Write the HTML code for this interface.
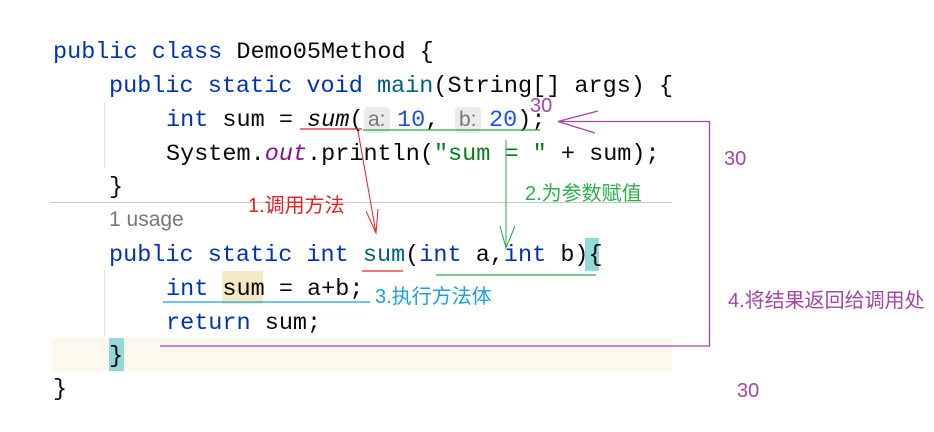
<!DOCTYPE html>
<html><head><meta charset="utf-8"><style>
body{margin:0;width:934px;height:432px;background:#fff;position:relative;overflow:hidden}
.l{position:absolute;font-family:"Liberation Mono",monospace;font-size:23.5px;line-height:34px;white-space:pre;color:#080808}
.k{color:#0033b3}.f{color:#00627a}.n{color:#1750eb}.s{color:#067d17}.o{color:#871094;font-style:italic}
.h{position:absolute;background:#ebebeb;color:#777;font-family:"Liberation Sans",sans-serif;font-size:21px;line-height:26px;border-radius:4px;padding:0 4px}
.t{position:absolute;font-family:"Liberation Sans","Noto Sans CJK SC",sans-serif;font-size:20px;line-height:24px;white-space:nowrap}
.bg{position:absolute}
</style></head><body>
<div class="bg" style="left:52px;top:338px;width:620px;height:33px;background:#fcf9ec"></div>
<div class="bg" style="left:109px;top:338px;width:15px;height:33px;background:#93d9d9"></div>
<div class="bg" style="left:585px;top:238px;width:14px;height:33px;background:#93d9d9"></div>
<div class="bg" style="left:222px;top:271px;width:41px;height:33px;background:#f5e9c6"></div>
<div class="bg" style="left:50px;top:202px;width:622px;height:1px;background:#c8c8c8"></div>
<div class="bg" style="left:104px;top:102px;width:1px;height:66px;background:#e6e6e6"></div>
<div class="bg" style="left:104px;top:270px;width:1px;height:66px;background:#e6e6e6"></div>

<div class="l" style="left:53px;top:36px"><span class="k">public class</span> Demo05Method {</div>
<div class="l" style="left:109px;top:70px"><span class="k">public static void</span> <span class="f">main</span>(String[] args) {</div>
<div class="l" style="left:166px;top:104px"><span class="k">int</span> sum = <i>sum</i>(</div>
<div class="h" style="left:364px;top:107px">a:</div>
<div class="l n" style="left:397px;top:104px">10<span style="color:#080808">,</span></div>
<div class="h" style="left:455px;top:107px">b:</div>
<div class="l" style="left:489px;top:104px"><span class="n">20</span>);</div>
<div class="l" style="left:166px;top:138px">System.<span class="o">out</span>.println(<span class="s">"sum = "</span> + sum);</div>
<div class="l" style="left:109px;top:171px">}</div>
<div class="t" style="left:109px;top:207px;font-size:21px;line-height:26px;color:#777">1 usage</div>
<div class="l" style="left:109px;top:239px"><span class="k">public static int</span> <span class="f">sum</span>(<span class="k">int</span> a,<span class="k">int</span> b){</div>
<div class="l" style="left:166px;top:273px"><span class="k">int</span> sum = a+b;</div>
<div class="l" style="left:166px;top:307px"><span class="k">return</span> sum;</div>
<div class="l" style="left:109px;top:340px">}</div>
<div class="l" style="left:53px;top:373px">}</div>

<svg style="position:absolute;left:0;top:0" width="934" height="432">
<g fill="none" stroke-width="1.3">
<path d="M300 129H362M362 271H403" stroke="#e8202a"/>
<path d="M358 131L376 233M366 211L376 233L378 209" stroke="#e8202a" stroke-width="1"/>
<path d="M363 130H540M436 275H596" stroke="#28a745"/>
<path d="M506 140V248M500 226L506 248L515 226" stroke="#28a745" stroke-width="1"/>
<path d="M163 302H370" stroke="#1aa0e0"/>
<path d="M558 121.5H709.5V346H160M558 121.5L598 111M558 121.5L595 133" stroke="#a546a6"/>
</g>
</svg>
<div class="t" style="left:530px;top:94px;color:#a546a6">30</div>
<div class="t" style="left:724px;top:147px;color:#a546a6">30</div>
<div class="t" style="left:737px;top:379px;color:#a546a6">30</div>
<div class="t" style="left:728px;top:289px;color:#a546a6">4.将结果返回给调用处</div>
<div class="t" style="left:248px;top:194px;color:#e8202a">1.调用方法</div>
<div class="t" style="left:525px;top:182px;color:#28b04a">2.为参数赋值</div>
<div class="t" style="left:375px;top:285px;color:#1aa0e0">3.执行方法体</div>
</body></html>
